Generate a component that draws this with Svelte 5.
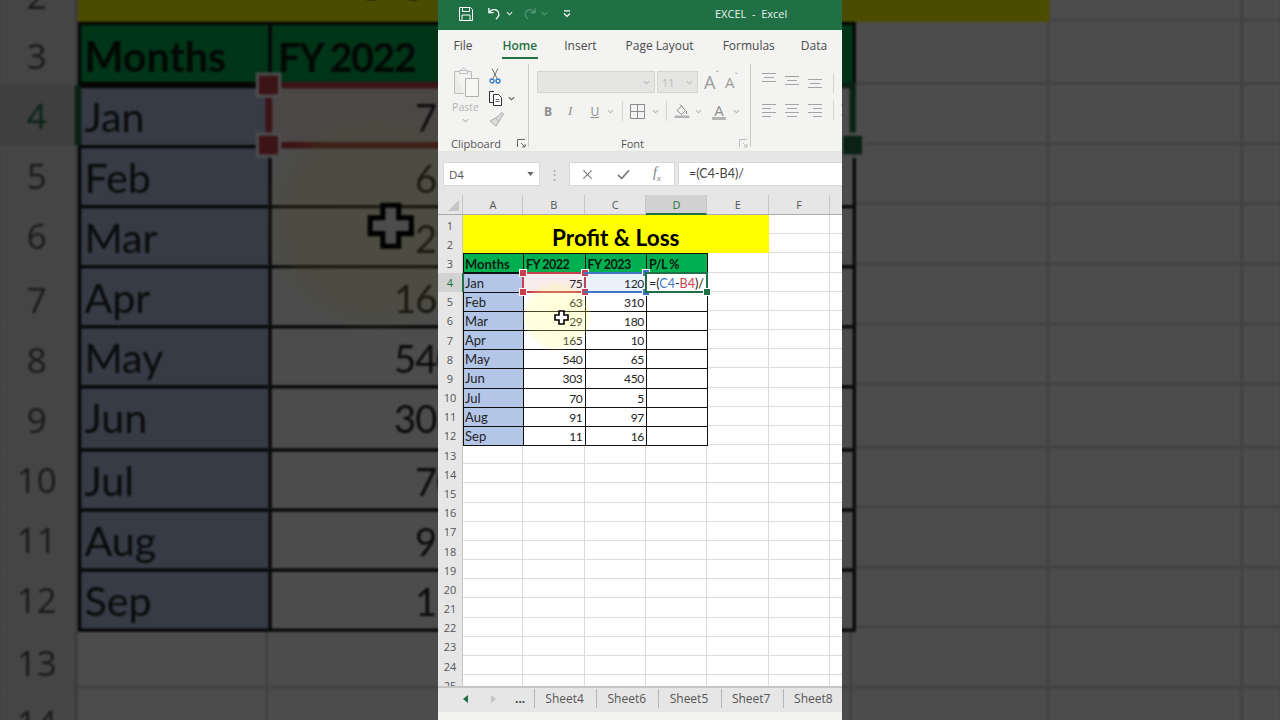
<script lang="ts">
  const colWidths = [60, 61.5, 61.5, 61, 61.5, 61, 61];
  const colNames = ["A", "B", "C", "D", "E", "F", "G"];
  const rowNums = Array.from({ length: 25 }, (_, i) => i + 1);

  const data = [
    ["Jan", 75, 120],
    ["Feb", 63, 310],
    ["Mar", 29, 180],
    ["Apr", 165, 10],
    ["May", 540, 65],
    ["Jun", 303, 450],
    ["Jul", 70, 5],
    ["Aug", 91, 97],
    ["Sep", 11, 16],
  ];
  const heads = ["Months", "FY 2022", "FY 2023", "P/L %"];
  const sheets = ["Sheet4", "Sheet6", "Sheet5", "Sheet7", "Sheet8"];
  const tabs = ["File", "Home", "Insert", "Page Layout", "Formulas", "Data"];

  const gridCols = colWidths.map((w) => w + "px").join(" ");
</script>

{#snippet chev()}
  <svg class="chev" viewBox="0 0 8 5" width="7" height="5"><path d="M1 1l3 3 3-3" fill="none" stroke="currentColor" stroke-width="1.2" /></svg>
{/snippet}

{#snippet launcher()}
  <svg viewBox="0 0 9 9" width="9" height="9" fill="none" stroke="currentColor"><path d="M.5 8V.5H8M4 4l4 4M8 5v3H5" /></svg>
{/snippet}

{#snippet app()}
  <div class="window">
    <header class="titlebar">
      <svg class="save" viewBox="0 0 16 16" width="16" height="16" fill="none" stroke="#fff" stroke-width="1"><path d="M1.5 1.5h11l2 2v11h-13zM4.500 1.500v4h7v-4M4 14.500v-5.500h8v5.500" /></svg>
      <svg class="undo" viewBox="0 0 16 16" width="15" height="15" fill="none" stroke="#fff" stroke-width="1.4"><path d="M2 2v5h5M2.500 7c2-3.500 6-4 8.500-2 3 2.500 2 6.500-1.500 9" /></svg>
      <span class="tchev">{@render chev()}</span>
      <svg class="redo" viewBox="0 0 16 16" width="15" height="15" fill="none" stroke="#5b9a78" stroke-width="1.2"><path d="M14 2v5H9M13.500 7c-2-3.500-6-4-8.500-2-3 2.500-2 6.500 1.500 9" /></svg>
      <span class="tchev dim">{@render chev()}</span>
      <svg class="qat" viewBox="0 0 8 8" width="8" height="8" fill="none" stroke="#fff"><path d="M1 .8h6M1 3.500l3 3 3-3" stroke-width="1.200" /></svg>
      <span class="doc">EXCEL &nbsp;-&nbsp; Excel</span>
    </header>

    <nav class="tabs">
      {#each tabs as t}
        <span class="tab" class:active={t === "Home"} class:tight={t === "Formulas"}>{t}</span>
      {/each}
    </nav>

    <section class="ribbon">
      <div class="group clip">
        <div class="clipbody">
          <div class="paste">
            <svg viewBox="0 0 28 30" width="28" height="30" fill="none" stroke="#bdbdbd"><path d="M2.500 4.500v22h10M2.500 4.500h5M15.500 4.500h4v7" fill="#ebebe9" /><path d="M7.500 3.500h8v3h-8zM9.500 3.500c0-3 4-3 4 0" fill="#f3f3f1" /><path d="M13.500 11.500h13v18h-13z" fill="#f6f6f5" stroke="#b0b0b0" /></svg>
            <span>Paste</span>
            {@render chev()}
          </div>
          <div class="clipacts">
            <svg viewBox="0 0 12 16" width="12" height="16" fill="none"><path d="M3 .5l5 10M9 .5L4 10.500" stroke="#777" /><circle cx="3" cy="13" r="2" stroke="#2f78c4" stroke-width="1.300" /><circle cx="9" cy="13" r="2" stroke="#2f78c4" stroke-width="1.300" /></svg>
            <div class="copyrow">
              <svg viewBox="0 0 16 16" width="16" height="16" fill="none" stroke="#333"><path d="M5 1.500H.5v11H4" /><path d="M4.500 4.500h5l3 3v8h-8z" fill="#fff" /><path d="M6.500 9.500h4M6.500 11.500h4" stroke="#666" /></svg>
              <span class="dark">{@render chev()}</span>
            </div>
            <svg viewBox="0 0 16 16" width="15" height="15" fill="none" stroke="#a9a9a9"><path d="M1 9.500l6-3 3.500 3.500-3 5zM7 6.500l7-6 1.500 1.500-5 8" fill="#dcdcdb" /></svg>
          </div>
        </div>
        <div class="glabel"><span>Clipboard</span><span class="launch">{@render launcher()}</span></div>
      </div>

      <div class="group font">
        <div class="fontbody">
          <div class="frow">
            <div class="fname">{@render chev()}</div>
            <div class="fsize"><span>11</span>{@render chev()}</div>
            <span class="grow">A<sup>ˆ</sup></span>
            <span class="shrink">A<sup>ˇ</sup></span>
          </div>
          <div class="frow second">
            <b class="fb">B</b>
            <i class="fi">I</i>
            <u class="fu">U</u>
            <span class="cw m3">{@render chev()}</span>
            <span class="vsep wide"></span>
            <svg viewBox="0 0 15 15" width="15" height="15" fill="none" stroke="#8c8c8c"><path d="M.5.500h14v14H.5zM7.500.500v14M.5 7.500h14" /></svg>
            <span class="cw m2">{@render chev()}</span>
            <span class="vsep"></span>
            <svg class="fill" viewBox="0 0 16 16" width="16" height="16" fill="none"><path d="M3 7.500l4.500-4.500 4 4.500-4 4z" stroke="#8c8c8c" /><path d="M6 1.500l2 2M12.500 8v3" stroke="#8c8c8c" /><path d="M.5 12.500h15V15H.5z" fill="#b4b4b4" /></svg>
            {@render chev()}
            <span class="acolor">A</span>
            <span class="cw m2">{@render chev()}</span>
          </div>
        </div>
        <div class="glabel center"><span>Font</span><span class="launch pale">{@render launcher()}</span></div>
      </div>

      <div class="group align">
        <div class="alines top">
          <svg viewBox="0 0 14 10" width="14" height="10" stroke="#a3a3a3"><path d="M0 .500h14M2 4.500h10M0 8.500h14" /></svg>
          <svg class="mid" viewBox="0 0 14 10" width="14" height="10" stroke="#a3a3a3"><path d="M0 .500h14M2 4.500h10M0 8.500h14" /></svg>
          <svg class="low" viewBox="0 0 14 10" width="14" height="10" stroke="#a3a3a3"><path d="M0 .500h14M2 4.500h10M0 8.500h14" /></svg>
          <span class="vsep"></span>
          <svg class="orient" viewBox="0 0 8 14" width="8" height="14" fill="none" stroke="#ababab"><path d="M1 3c2-2 4-1 5 1M1 9l5 3M4 6l3 2" /></svg>
        </div>
        <div class="alines">
          <svg viewBox="0 0 14 13" width="14" height="13" stroke="#a3a3a3"><path d="M0 .500h14M0 4.500h9M0 8.500h14M0 12.500h9" /></svg>
          <svg viewBox="0 0 14 13" width="14" height="13" stroke="#a3a3a3"><path d="M0 .500h14M2 4.500h10M0 8.500h14M2 12.500h10" /></svg>
          <svg viewBox="0 0 14 13" width="14" height="13" stroke="#a3a3a3"><path d="M0 .500h14M5 4.500h9M0 8.500h14M5 12.500h9" /></svg>
          <span class="vsep"></span>
          <svg class="orient" viewBox="0 0 8 12" width="8" height="12" fill="none" stroke="#ababab"><path d="M0 1h8M0 11h8M4 6h4M3 4L1 6l2 2" /></svg>
        </div>
      </div>
    </section>

    <section class="fbar">
      <div class="namebox"><span>D4</span><svg viewBox="0 0 8 5" width="7" height="4" fill="#666"><path d="M0 0h8L4 5z" /></svg></div>
      <span class="grip">⋮</span>
      <div class="fbtns">
        <svg viewBox="0 0 12 12" width="11" height="11" fill="none" stroke="#7a7a7a" stroke-width="1.300"><path d="M1.500 1.500l9 9M10.500 1.500l-9 9" /></svg>
        <svg viewBox="0 0 14 12" width="13" height="11" fill="none" stroke="#7a7a7a" stroke-width="1.800"><path d="M1 6.500l4 4 8-9" /></svg>
        <span class="fx">f<sub>x</sub></span>
      </div>
      <div class="finput">=(C4-B4)/</div>
    </section>

    <section class="sheet">
      <div class="colheads" style="grid-template-columns: 25px {gridCols}">
        <div class="corner"><svg viewBox="0 0 12 12" width="11" height="11"><path d="M12 0v12H0z" fill="#c6c6c6" /></svg></div>
        {#each colNames as c}
          <div class="colhead" class:on={c === "D"}>{c}</div>
        {/each}
      </div>

      <div class="body" style="grid-template-columns: 25px {gridCols}">
        {#each rowNums as r}
          <div class="rowhead" class:on={r === 4} style="grid-row: {r}; grid-column: 1">{r}</div>
          {#each colNames as _, i}
            <div class="cell" style="grid-row: {r}; grid-column: {i + 2}"></div>
          {/each}
        {/each}

        <div class="title">Profit &amp; Loss</div>

        {#each heads as h, i}
          <div class="hd" class:fy={i > 0} style="grid-row: 3; grid-column: {i + 2}">{h}</div>
        {/each}

        {#each data as row, i}
          <div class="td month" style="grid-row: {i + 4}; grid-column: 2">{row[0]}</div>
          <div class="td num" style="grid-row: {i + 4}; grid-column: 3">{row[1]}</div>
          <div class="td num" style="grid-row: {i + 4}; grid-column: 4">{row[2]}</div>
          <div class="td" style="grid-row: {i + 4}; grid-column: 5"></div>
        {/each}

        <div class="ref red" style="grid-row: 4; grid-column: 3">
          <i class="h tl"></i><i class="h tr"></i><i class="h bl"></i><i class="h br"></i>
        </div>
        <div class="ref blue" style="grid-row: 4; grid-column: 4">
          <i class="h tr"></i><i class="h br"></i>
        </div>
        <div class="edit" style="grid-row: 4; grid-column: 5">
          <span>=(<em class="c">C4</em>-<em class="b">B4</em>)/</span><i class="caret"></i><i class="h br"></i>
        </div>
        <div class="active-a" style="grid-row: 4; grid-column: 2"></div>

        <div class="halo"></div>
        <svg class="cross" viewBox="0 0 15 15" width="15" height="15"><path d="M5 1h5v4h4v5h-4v4H5v-4H1V5h4z" fill="#fff" stroke="#000" stroke-width="1.600" /></svg>
      </div>
    </section>

    <footer class="sheetbar">
      <svg class="arr" viewBox="0 0 5 8" width="5" height="8"><path d="M5 0v8L0 4z" fill="#1f7145" /></svg>
      <svg class="arr two" viewBox="0 0 5 8" width="5" height="8"><path d="M0 0v8l5-4z" fill="#c4c4c4" /></svg>
      <span class="dots">...</span>
      {#each sheets as s}
        <span class="stab">{s}</span>
      {/each}
    </footer>
    <div class="status"><span>Point</span></div>
  </div>
{/snippet}

<div class="stage">
  <div class="backdrop">{@render app()}</div>
  <div class="front">{@render app()}</div>
</div>

<style>
  :global(body) {
    margin: 0;
    background: #000;
  }
  .stage {
    position: relative;
    width: 1280px;
    height: 720px;
    overflow: hidden;
  }
  .backdrop {
    position: absolute;
    left: 438px;
    top: 0;
    width: 404px;
    height: 720px;
    transform: scale(3.175, 3.16);
    transform-origin: 202px 360px;
    filter: blur(0.4px) brightness(0.3);
  }
  .front {
    position: absolute;
    left: 438px;
    top: 0;
    width: 404px;
    height: 720px;
  }
  .window {
    width: 404px;
    height: 720px;
    overflow: hidden;
    display: flex;
    flex-direction: column;
    background: #fff;
    font-family: "Open Sans", "Noto Sans", sans-serif;
    color: #444;
  }

  .titlebar {
    height: 30px;
    flex: none;
    background: #1f7145;
    display: flex;
    align-items: center;
    color: #fff;
    padding: 0 0 3px 20px;
    box-sizing: border-box;
    position: relative;
  }
  .undo { margin-left: 13px; }
  .tchev { margin-left: 4px; display: flex; color: #e4efe9; }
  .tchev.dim { color: #5b9a78; }
  .redo { margin-left: 9px; }
  .qat { margin-left: 15px; }
  .doc {
    margin-left: 144px;
    font-size: 11px;
    color: #e9f2ed;
    white-space: nowrap;
  }

  .tabs {
    height: 31px;
    flex: none;
    background: #f3f3f1;
    display: flex;
    align-items: center;
    padding-left: 15.5px;
    gap: 29px;
    font-size: 12px;
    color: #4a4a4a;
  }
  .tab { position: relative; white-space: nowrap; line-height: 30px; }
  .tab.tight { margin-right: -3px; }
  .tab.active { color: #1f7145; font-weight: 600; margin: 0 -2px 0 1px; }
  .tab.active::after {
    content: "";
    position: absolute;
    left: -1px;
    right: -1px;
    bottom: 2px;
    height: 2px;
    background: #1f7145;
  }

  .ribbon {
    height: 92px;
    flex: none;
    background: #f3f3f1;
    display: flex;
    border-bottom: 2px solid #e3e3e1;
    box-sizing: border-box;
    color: #b5b5b5;
  }
  .group {
    display: flex;
    flex-direction: column;
    box-sizing: border-box;
    border-right: 1px solid #c9c9c7;
    margin: 3px 0 4px;
    flex: none;
  }
  .glabel {
    font-size: 11px;
    color: #555;
    height: 8px;
    display: flex;
    align-items: center;
    justify-content: space-between;
    padding: 0 2px 0 13px;
    margin-top: auto;
  }
  .glabel.center { padding-left: 92px; padding-right: 2px; color: #555; }
  .launch { display: flex; color: #666; }
  .launch.pale { color: #bdbdbd; }
  .clip { width: 91px; }
  .clipbody {
    display: flex;
    padding: 1px 0 0 12.5px;
  }
  .paste {
    width: 30px;
    display: flex;
    flex-direction: column;
    align-items: center;
    font-size: 10.5px;
    color: #b5b5b5;
    line-height: 14px;
    padding-top: 2px;
  }
  .paste span { margin-top: 3px; }
  .paste .chev { margin-top: 4px; }
  .clipacts {
    margin-left: 8px;
    display: flex;
    flex-direction: column;
    gap: 6px;
    align-items: flex-start;
    padding-top: 3px;
  }
  .copyrow { display: flex; align-items: center; gap: 3px; }
  .dark { color: #555; display: flex; }
  .font { width: 222px; }
  .fontbody {
    padding: 7px 0 0 8px;
    display: flex;
    flex-direction: column;
    gap: 7px;
  }
  .frow { display: flex; align-items: center; height: 22px; }
  .fname, .fsize {
    height: 22px;
    box-sizing: border-box;
    background: #e5e5e4;
    border: 1px solid #d4d4d3;
    display: flex;
    align-items: center;
    justify-content: flex-end;
    padding-right: 4px;
  }
  .fname { width: 118px; }
  .fsize {
    width: 41px;
    margin-left: 2px;
    justify-content: space-between;
    padding-left: 4px;
    font-size: 11px;
    color: #b9b9b9;
  }
  .grow { margin-left: 6px; font-size: 18px; color: #9c9c9c; display: flex; }
  .shrink { margin-left: 6px; font-size: 15px; color: #9c9c9c; display: flex; }
  sup { font-size: 9px; line-height: 1; }
  .second { padding-left: 7px; gap: 5px; color: #b5b5b5; }
  .fb { font-size: 12px; color: #8c8c8c; margin-right: 11px; }
  .fi { font-size: 13px; color: #8c8c8c; font-family: "Liberation Serif", serif; margin-right: 11px; }
  .fu { font-size: 12px; color: #8c8c8c; margin-left: 2px; }
  .cw { display: flex; }
  .m3 { margin-left: 3px; }
  .m2 { margin-left: 2px; }
  .vsep {
    width: 1px;
    height: 20px;
    background: #d4d4d3;
    margin: 0 2px;
    flex: none;
  }
  .vsep.wide { margin-left: 3px; }
  .acolor {
    font-size: 15px;
    line-height: 14px;
    color: #8c8c8c;
    border-bottom: 3px solid #b4b4b4;
    padding: 0 2px;
    margin-left: 5px;
  }
  .align {
    border: 0;
    padding: 9px 0 0 11px;
    gap: 7px;
  }
  .alines {
    display: flex;
    align-items: center;
    gap: 9px;
    height: 20px;
  }
  .alines.top { align-items: flex-start; }
  .mid { margin-top: 3px; }
  .low { margin-top: 6px; }
  .orient { margin-left: -4px; flex: none; }

  .fbar {
    height: 42px;
    flex: none;
    background: #e6e6e6;
    display: flex;
    align-items: center;
    padding: 0 0 0 5px;
    box-sizing: border-box;
    font-size: 11.5px;
    color: #555;
  }
  .namebox {
    width: 97px;
    height: 24px;
    background: #fff;
    border: 1px solid #d9d9d9;
    box-sizing: border-box;
    display: flex;
    align-items: center;
    justify-content: space-between;
    padding: 0 5px 0 5px;
  }
  .grip { width: 29px; text-align: center; color: #a8a8a8; font-size: 13px; }
  .fbtns {
    width: 106px;
    height: 24px;
    background: #fff;
    border: 1px solid #d9d9d9;
    box-sizing: border-box;
    display: flex;
    align-items: center;
    justify-content: space-between;
    padding: 0 13px 0 12px;
  }
  .fx {
    font-family: "Liberation Serif", serif;
    font-style: italic;
    font-size: 14px;
    color: #7a7a7a;
  }
  .fx sub { font-size: 9px; }
  .finput {
    flex: 1;
    margin-left: 3px;
    height: 24px;
    background: #fff;
    border: 1px solid #d9d9d9;
    border-right: 0;
    box-sizing: border-box;
    line-height: 22px;
    padding-left: 10px;
    font-family: Lato, "Open Sans", sans-serif;
    font-size: 12.5px;
    color: #444;
  }

  .sheet { flex: none; height: 491px; overflow: hidden; background: #fff; }
  .colheads {
    display: grid;
    height: 20px;
    background: #e6e6e6;
    border-bottom: 1px solid #ababab;
    box-sizing: border-box;
    font-size: 11px;
    color: #555;
  }
  .corner {
    display: flex;
    align-items: flex-end;
    justify-content: flex-end;
    padding: 0 3px 3px 0;
    border-right: 1px solid #c6c6c6;
  }
  .colhead {
    display: flex;
    align-items: center;
    justify-content: center;
    border-right: 1px solid #c6c6c6;
    padding-left: 1px;
  }
  .colhead.on {
    background: #d2d2d2;
    color: #1f7145;
    border-bottom: 2px solid #1f7145;
    margin-bottom: -1px;
  }
  .body {
    display: grid;
    position: relative;
    grid-template-rows: repeat(25, 19.18px);
    font-family: Lato, "Open Sans", sans-serif;
    font-size: 13px;
    color: #222;
  }
  .rowhead {
    background: #e6e6e6;
    border-right: 1px solid #c6c6c6;
    display: flex;
    align-items: center;
    justify-content: center;
    font-family: "Open Sans", sans-serif;
    font-size: 11px;
    color: #555;
    box-sizing: border-box;
    padding-top: 1px;
  }
  .rowhead.on { background: #d2d2d2; color: #1f7145; }
  .cell {
    border-right: 1px solid #dcdcdc;
    border-bottom: 1px solid #dcdcdc;
    box-sizing: border-box;
  }
  .title {
    grid-row: 1 / span 2;
    grid-column: 2 / span 5;
    background: #ffff00;
    color: #000;
    font-weight: 700;
    font-size: 22.5px;
    text-align: center;
    align-self: stretch;
    line-height: 46px;
    height: 38px;
    overflow: visible;
  }
  .hd {
    background: #00b050;
    color: #0b1a10;
    font-weight: 700;
    border: 1px solid #111;
    margin: 0 -1px -1px 0;
    line-height: 20px;
    height: 18px;
    padding-left: 1px;
    font-size: 13px;
    white-space: nowrap;
  }
  .hd.fy { letter-spacing: -0.5px; font-size: 12.5px; line-height: 21px; padding-left: 2px; }
  .td {
    border: 1px solid #111;
    margin: 0 -1px -1px 0;
    line-height: 19px;
    padding: 0 3px 0 1px;
    background: #fff;
  }
  .month { background: #b4c6e7; }
  .num { text-align: right; font-size: 12px; letter-spacing: -0.3px; padding-right: 2px; }
  .ref {
    position: relative;
    margin: -1px -1px -1px -1px;
    border: 2px solid;
    z-index: 2;
  }
  .ref.red { border-color: #c8404c; background: rgba(200, 64, 76, 0.1); }
  .ref.blue { border-color: #3e75c4; background: rgba(62, 117, 196, 0.1); border-left: 0; }
  .h {
    position: absolute;
    width: 6px;
    height: 6px;
    background: currentColor;
    outline: 1px solid #fff;
    z-index: 3;
  }
  .red .h { color: #c8404c; }
  .blue .h { color: #3e75c4; }
  .tl { left: -4px; top: -4px; }
  .tr { right: -4px; top: -4px; }
  .bl { left: -4px; bottom: -4px; }
  .br { right: -4px; bottom: -4px; }
  .edit {
    position: relative;
    margin: -1px -1px -1px -1px;
    border: 2px solid #1f7145;
    background: #fff;
    z-index: 4;
    font-size: 12.5px;
    color: #222;
    line-height: 15px;
    padding: 2px 0 0 2px;
    white-space: nowrap;
    display: flex;
    align-items: center;
  }
  .edit em { font-style: normal; }
  .edit .c { color: #3e75c4; }
  .edit .b { color: #c8404c; }
  .edit .h { color: #1f7145; }
  .caret {
    width: 1px;
    height: 14px;
    background: #000;
    margin-left: 3px;
  }
  .active-a {
    border-left: 2px solid #1f7145;
    margin-left: -1px;
    z-index: 1;
    pointer-events: none;
  }
  .halo {
    position: absolute;
    left: 84px;
    top: 66px;
    width: 70px;
    height: 70px;
    border-radius: 50%;
    background: radial-gradient(circle, rgba(255, 255, 120, 0.28), rgba(255, 255, 120, 0.22) 60%, rgba(255, 255, 120, 0) 72%);
    z-index: 5;
    pointer-events: none;
  }
  .cross { position: absolute; left: 116px; top: 95px; z-index: 6; }

  .sheetbar {
    flex: none;
    height: 26px;
    background: #e6e6e6;
    border-top: 2px solid #c6c6c6;
    box-sizing: border-box;
    display: flex;
    align-items: center;
    padding-bottom: 3px;
    font-size: 12px;
    color: #555;
    position: relative;
    white-space: nowrap;
  }
  .arr { margin-left: 25px; flex: none; }
  .arr.two { margin-left: 23px; }
  .dots { margin-left: 19px; width: 19px; flex: none; font-weight: 700; color: #444; }
  .stab {
    width: 62.2px;
    flex: none;
    box-sizing: border-box;
    text-align: center;
    border-left: 1px solid #b5b5b5;
    line-height: 19px;
    padding-right: 2px;
  }
  .status {
    flex: 1;
    background: #f3f3f1;
    font-size: 11px;
    color: #555;
    padding: 6px 0 0 7px;
    line-height: 12px;
    overflow: hidden;
  }
</style>
